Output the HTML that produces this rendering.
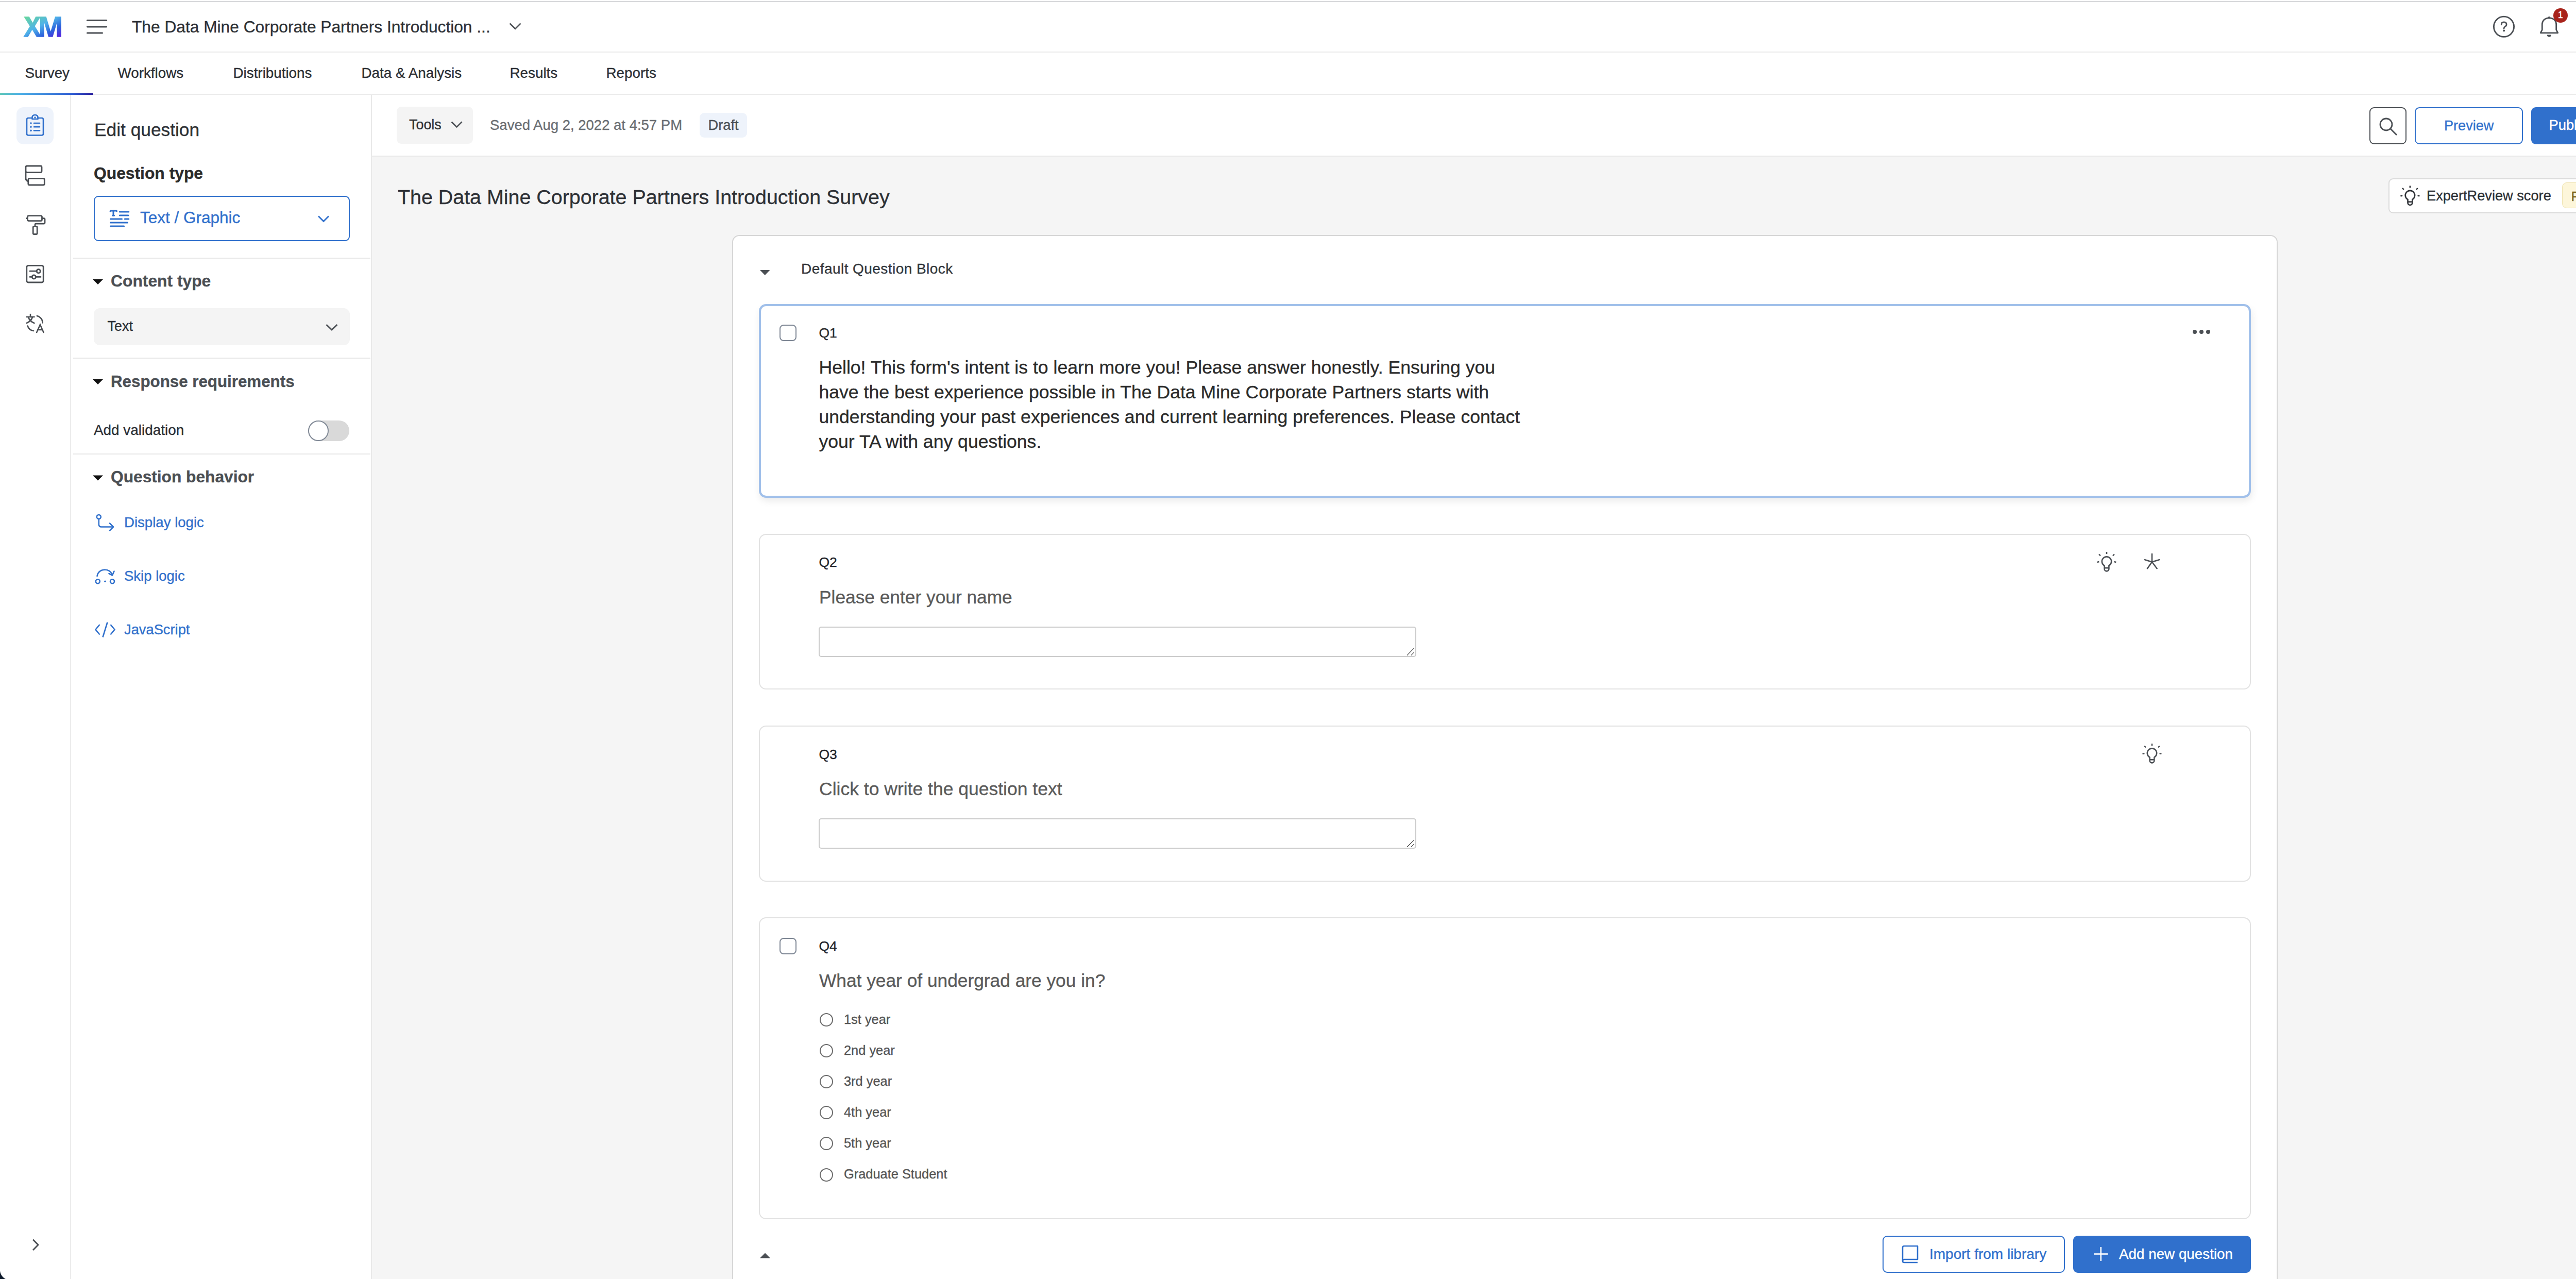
<!DOCTYPE html><html><head><meta charset="utf-8"><style>
html,body{margin:0;padding:0;width:5116px;height:2482px;overflow:hidden;background:#fff;}
body{position:relative;font-family:"Liberation Sans",sans-serif;}
.t{position:absolute;white-space:nowrap;line-height:1;-webkit-text-stroke:0.35px currentColor;}
.b{position:absolute;box-sizing:border-box;}
</style></head><body>
<div class="b" style="left:722px;top:304px;width:4394px;height:2178px;background:#f5f5f5;"></div>
<div class="b" style="left:0px;top:2px;width:5116px;height:2px;background:#d7d8da;"></div>
<div class="b" style="left:0px;top:100px;width:5116px;height:2px;background:#ebebeb;"></div>
<div class="b" style="left:0px;top:182px;width:5116px;height:2px;background:#ebebeb;"></div>
<div class="b" style="left:722px;top:302px;width:4394px;height:2px;background:#e9e9e9;"></div>
<div class="b" style="left:136px;top:184px;width:2px;height:2298px;background:#ececec;"></div>
<div class="b" style="left:720px;top:184px;width:2px;height:2298px;background:#e9e9e9;"></div>
<svg class="b" style="left:40px;top:26px;" width="88" height="52" viewBox="40 26 88 52"><defs><linearGradient id="xmg" x1="0" y1="0" x2="1" y2="1" gradientUnits="objectBoundingBox">
<stop offset="0" stop-color="#6ad99a"/><stop offset="0.45" stop-color="#50b2e9"/><stop offset="0.72" stop-color="#2c62dc"/><stop offset="1" stop-color="#5a1fe0"/></linearGradient></defs>
<path fill="url(#xmg)" fill-rule="evenodd" d="M46.2,32.2 L56.6,32.2 L63.5,43.9 L69.3,32.2 L89.7,32.2 L98.3,61 L107,32.2 L118.9,32.2 L118.9,71.8 L110.3,71.8 L110.3,45.1 L102.4,71.8 L94.1,71.8 L85.8,43.9 L85.8,71.8 L71,71.8 L62.5,57.8 L54.4,71.8 L45.2,71.8 L57.9,51 Z M77.9,34.1 L67.7,50.8 L77.9,67.2 Z"/></svg>
<svg class="b" style="left:160px;top:30px;" width="56" height="44" viewBox="160 30 56 44"><g stroke="#4b4f54" stroke-width="3.2" stroke-linecap="round"><line x1="169.5" y1="39.5" x2="206.5" y2="39.5"/><line x1="169.5" y1="51.8" x2="206.5" y2="51.8"/><line x1="169.5" y1="64" x2="198.5" y2="64"/></g></svg>
<div class="t" style="left:256.00px;top:36.67px;font-size:31.7px;color:#2d3035;">The Data Mine Corporate Partners Introduction ...</div>
<svg class="b" style="left:984px;top:40px;" width="32" height="22" viewBox="984 40 32 22"><polyline points="989.5,45.5 1000,56 1010.5,45.5" fill="none" stroke="#4b4f54" stroke-width="2.6"/></svg>
<svg class="b" style="left:4830px;top:22px;" width="60" height="60" viewBox="4830 22 60 60"><circle cx="4860" cy="51.8" r="19.6" fill="none" stroke="#4b4f54" stroke-width="2.8"/><path d="M4855.2,47.8 q0,-4.9 4.9,-4.9 q5,0 5,4.7 q0,2.6 -2.6,4 q-2.4,1.3 -2.4,3.4 v0.6" fill="none" stroke="#4b4f54" stroke-width="2.7" stroke-linecap="round"/><circle cx="4860.1" cy="59.6" r="2" fill="#4b4f54"/></svg>
<svg class="b" style="left:4920px;top:24px;" width="56" height="56" viewBox="4920 24 56 56"><path d="M4931.2,63.8 H4964.8 L4961.7,57.8 V47.8 C4961.7,39.6 4956,34.8 4948,34.8 C4940,34.8 4934.3,39.6 4934.3,47.8 V57.8 Z" fill="none" stroke="#4b4f54" stroke-width="2.8" stroke-linejoin="round"/><circle cx="4948" cy="34.2" r="2.3" fill="#4b4f54"/><path d="M4943.8,67.6 a4.1,4.1 0 0 0 8.2,0 z" fill="#4b4f54"/></svg>
<div class="b" style="left:4956px;top:16px;width:28px;height:28px;background:#a8231b;border-radius:50%;"></div>
<div class="t" style="left:4965.00px;top:21.19px;font-size:17.5px;color:#fff;">1</div>
<div class="b" style="left:5012px;top:28px;width:48px;height:48px;background:#3070cc;border-radius:50%;"></div>
<div class="t" style="left:5028.50px;top:41.39px;font-size:20.8px;color:#fff;">N</div>
<div class="t" style="left:48.50px;top:128.47px;font-size:27.8px;color:#2d3035;">Survey</div>
<div class="t" style="left:228.50px;top:128.47px;font-size:27.8px;color:#2d3035;">Workflows</div>
<div class="t" style="left:452.50px;top:128.47px;font-size:27.8px;color:#2d3035;">Distributions</div>
<div class="t" style="left:701.50px;top:128.47px;font-size:27.8px;color:#2d3035;">Data &amp; Analysis</div>
<div class="t" style="left:989.50px;top:128.47px;font-size:27.8px;color:#2d3035;">Results</div>
<div class="t" style="left:1176.50px;top:128.47px;font-size:27.8px;color:#2d3035;">Reports</div>
<div class="b" style="left:0px;top:180px;width:181px;height:4px;background:linear-gradient(90deg,#5cc6b8 0%,#4aaee6 22%,#3e86dc 50%,#2d5ad2 78%,#2a1f9c 100%);"></div>
<div class="b" style="left:32px;top:208px;width:72px;height:72px;background:#eef3fb;border-radius:14px;"></div>
<svg class="b" style="left:40px;top:215px;" width="56" height="56" viewBox="40 215 56 56"><g fill="none" stroke="#3070cc" stroke-width="2.6" stroke-linejoin="round">
<path d="M62.5,229 h-7.5 q-3,0 -3,3 v27.5 q0,3 3,3 h26 q3,0 3,-3 v-27.5 q0,-3 -3,-3 h-7.5"/>
<path d="M62.5,231 v-2.5 q0,-5.5 5.5,-5.5 q5.5,0 5.5,5.5 v2.5 z"/>
<line x1="66" y1="239" x2="77" y2="239" stroke-linecap="round"/><line x1="66" y1="246.2" x2="77" y2="246.2" stroke-linecap="round"/><line x1="66" y1="253.4" x2="77" y2="253.4" stroke-linecap="round"/></g>
<g fill="#3070cc"><circle cx="60" cy="239" r="1.8"/><circle cx="60" cy="246.2" r="1.8"/><circle cx="60" cy="253.4" r="1.8"/><circle cx="68" cy="228" r="1.7"/></g></svg>
<svg class="b" style="left:40px;top:312px;" width="56" height="56" viewBox="40 312 56 56"><g fill="none" stroke="#4b4f54" stroke-width="2.8" stroke-linejoin="round">
<rect x="50" y="322" width="31" height="12.6" rx="2.5"/><rect x="54.8" y="346.4" width="31.5" height="12.6" rx="2.5"/>
<path d="M50,334 v12 q0,4.5 4.8,6"/></g></svg>
<svg class="b" style="left:40px;top:410px;" width="56" height="56" viewBox="40 410 56 56"><g fill="none" stroke="#4b4f54" stroke-width="2.8" stroke-linejoin="round">
<rect x="53.5" y="418.6" width="28" height="10" rx="2.5"/><path d="M81.5,423.6 h3.5 q2,0 2,2 v6.5 q0,2 -2,2 h-15 q-2,0 -2,2 v3"/>
<rect x="64.2" y="439.5" width="8" height="15" rx="2"/><path d="M53.5,423.6 h-3.5"/></g></svg>
<svg class="b" style="left:40px;top:505px;" width="56" height="56" viewBox="40 505 56 56"><g fill="none" stroke="#4b4f54" stroke-width="2.8" stroke-linecap="round">
<rect x="51.8" y="515.4" width="32.4" height="32.6" rx="3"/>
<line x1="58" y1="526.2" x2="71" y2="526.2"/><circle cx="74.7" cy="526.2" r="3.6"/>
<line x1="69.5" y1="537.4" x2="79" y2="537.4"/><line x1="58" y1="537.4" x2="62" y2="537.4"/><circle cx="65.8" cy="537.4" r="3.6"/></g></svg>
<svg class="b" style="left:40px;top:600px;" width="56" height="56" viewBox="40 600 56 56"><g fill="none" stroke="#4b4f54" stroke-width="2.6" stroke-linecap="round">
<line x1="51.5" y1="615" x2="66.5" y2="615"/><line x1="59" y1="610" x2="59" y2="614"/>
<path d="M55,615.5 q2.5,8 11.5,11.5"/><path d="M63,615.5 q-2.5,8 -11.5,11.5"/>
<path d="M71.8,613 a14,14 0 0 1 11,13.5"/><path d="M53.6,632.5 a14,14 0 0 0 11.5,9.5"/>
<path d="M71.2,645 l6.7,-15 l6.7,15"/><line x1="73.5" y1="640" x2="82.3" y2="640"/></g></svg>
<svg class="b" style="left:56px;top:2398px;" width="26" height="36" viewBox="56 2398 26 36"><polyline points="64,2405.5 74,2415.8 64,2426" fill="none" stroke="#4b4f54" stroke-width="2.8"/></svg>
<div class="b" style="left:0;top:2462px;width:24px;height:20px;background:radial-gradient(circle at 20.2px 2px, rgba(14,26,44,0) 19.8px, #0e1a2c 20.8px);"></div>
<div class="b" style="left:5092px;top:2462px;width:24px;height:20px;background:radial-gradient(circle at 7.1px 2.2px, rgba(14,26,44,0) 19.8px, #0e1a2c 20.8px);"></div>
<div class="t" style="left:183.00px;top:234.12px;font-size:35.3px;color:#2d3035;">Edit question</div>
<div class="t" style="left:182.00px;top:321.08px;font-size:31.8px;color:#2b2b2b;font-weight:700;">Question type</div>
<div class="b" style="left:182px;top:380px;width:497px;height:88px;border:2.5px solid #3070cc;border-radius:9px;"></div>
<svg class="b" style="left:205px;top:400px;" width="52" height="48" viewBox="205 400 52 48"><g stroke="#3070cc" stroke-width="3" stroke-linecap="round" fill="none">
<path d="M213.8,411 l0.6,-2 h11.8 l0.6,2" stroke-linecap="butt" stroke-width="2.8"/><line x1="220" y1="409" x2="220" y2="418"/><line x1="218.5" y1="418.3" x2="221.5" y2="418.3"/>
<line x1="232.3" y1="410.9" x2="249.8" y2="410.9"/><line x1="232.3" y1="418" x2="249" y2="418"/>
<line x1="214.5" y1="424.9" x2="236.5" y2="424.9"/><line x1="242.3" y1="424.9" x2="249.8" y2="424.9"/>
<line x1="214.5" y1="432" x2="247.5" y2="432"/><line x1="214.5" y1="439" x2="240.6" y2="439"/></g></svg>
<div class="t" style="left:272.00px;top:407.34px;font-size:31.5px;color:#3070cc;">Text / Graphic</div>
<svg class="b" style="left:610px;top:412px;" width="36" height="26" viewBox="610 412 36 26"><polyline points="618,419.5 628,429.5 638,419.5" fill="none" stroke="#3070cc" stroke-width="2.8"/></svg>
<div class="b" style="left:142px;top:500px;width:577px;height:2px;background:#e8e8e8;"></div>
<svg class="b" style="left:176px;top:536px;" width="30" height="22" viewBox="176 536 30 22"><polygon points="180,542 200,542 190,552" fill="#111"/></svg>
<div class="t" style="left:215.00px;top:530.08px;font-size:31.8px;color:#4b4f54;font-weight:700;">Content type</div>
<div class="b" style="left:182px;top:598px;width:497px;height:72px;background:#f4f4f4;border-radius:12px;"></div>
<div class="t" style="left:208.60px;top:619.73px;font-size:26.9px;color:#2d3035;">Text</div>
<svg class="b" style="left:626px;top:622px;" width="36" height="26" viewBox="626 622 36 26"><polyline points="633.5,630 644,640 654.5,630" fill="none" stroke="#4b4f54" stroke-width="2.8"/></svg>
<div class="b" style="left:142px;top:694px;width:577px;height:2px;background:#e8e8e8;"></div>
<svg class="b" style="left:176px;top:730px;" width="30" height="22" viewBox="176 730 30 22"><polygon points="180,736 200,736 190,746" fill="#111"/></svg>
<div class="t" style="left:215.00px;top:724.50px;font-size:31.3px;color:#4b4f54;font-weight:700;">Response requirements</div>
<div class="t" style="left:182.00px;top:821.38px;font-size:27.9px;color:#2d3035;">Add validation</div>
<div class="b" style="left:598px;top:816px;width:80px;height:40px;background:#d9d9d9;border-radius:20px;"></div>
<div class="b" style="left:598px;top:816px;width:40px;height:40px;background:#fff;border:2.5px solid #808996;border-radius:50%;"></div>
<div class="b" style="left:142px;top:880px;width:577px;height:2px;background:#e8e8e8;"></div>
<svg class="b" style="left:176px;top:922px;" width="30" height="22" viewBox="176 922 30 22"><polygon points="180,922.5 200,922.5 190,932.5" fill="#111"/></svg>
<div class="t" style="left:215.00px;top:909.67px;font-size:31.7px;color:#4b4f54;font-weight:700;">Question behavior</div>
<svg class="b" style="left:180px;top:992px;" width="48" height="44" viewBox="180 992 48 44"><g fill="none" stroke="#3070cc" stroke-width="2.6" stroke-linecap="round" stroke-linejoin="round">
<circle cx="191.8" cy="1003" r="4"/><path d="M191.8,1007 v10.5 q0,5 5,5 h22"/><polyline points="213,1015.5 220,1022.5 213,1029.5"/></g></svg>
<div class="t" style="left:241.00px;top:999.64px;font-size:27.6px;color:#3070cc;">Display logic</div>
<svg class="b" style="left:180px;top:1098px;" width="48" height="40" viewBox="180 1098 48 40"><g fill="none" stroke="#3070cc" stroke-width="2.6" stroke-linecap="round" stroke-linejoin="round">
<circle cx="189.8" cy="1128.3" r="4"/><circle cx="218" cy="1128.3" r="4"/>
<path d="M188.5,1118 q2,-11.5 14.5,-12.5 q11,0 15,10"/><polyline points="211.5,1113 218,1116.5 221.5,1108.5"/></g>
<circle cx="204" cy="1128.3" r="1.8" fill="#3070cc"/></svg>
<div class="t" style="left:241.00px;top:1103.72px;font-size:27.5px;color:#3070cc;">Skip logic</div>
<svg class="b" style="left:180px;top:1200px;" width="48" height="42" viewBox="180 1200 48 42"><g fill="none" stroke="#3070cc" stroke-width="2.6" stroke-linejoin="miter">
<polyline points="193.5,1212 185.5,1221.8 193.5,1231.5"/><polyline points="214.5,1212 222.5,1221.8 214.5,1231.5"/><line x1="208.5" y1="1207.5" x2="199.5" y2="1236.5"/></g></svg>
<div class="t" style="left:241.00px;top:1208.29px;font-size:27.3px;color:#3070cc;">JavaScript</div>
<div class="b" style="left:770px;top:207px;width:148px;height:72px;background:#f4f4f4;border-radius:9px;"></div>
<div class="t" style="left:794.00px;top:229.23px;font-size:26.9px;color:#2d3035;">Tools</div>
<svg class="b" style="left:870px;top:230px;" width="32" height="26" viewBox="870 230 32 26"><polyline points="876.5,236.5 886.5,246.5 896.5,236.5" fill="none" stroke="#4b4f54" stroke-width="2.6"/></svg>
<div class="t" style="left:951.00px;top:228.72px;font-size:27.5px;color:#6b6e73;">Saved Aug 2, 2022 at 4:57 PM</div>
<div class="b" style="left:1358px;top:219px;width:92px;height:48px;background:#eef3fb;border-radius:9px;"></div>
<div class="t" style="left:1374.50px;top:228.89px;font-size:27.3px;color:#4b4f54;">Draft</div>
<div class="b" style="left:4599px;top:208px;width:72px;height:72px;border:2.5px solid #4b4f54;border-radius:9px;"></div>
<svg class="b" style="left:4610px;top:220px;" width="50" height="50" viewBox="4610 220 50 50"><circle cx="4631.5" cy="241.5" r="11.5" fill="none" stroke="#4b4f54" stroke-width="2.8"/><line x1="4639.8" y1="249.8" x2="4652" y2="262" stroke="#4b4f54" stroke-width="2.8"/></svg>
<div class="b" style="left:4687px;top:208px;width:210px;height:72px;border:2.5px solid #3070cc;border-radius:9px;background:#fff;"></div>
<div class="t" style="left:4744.00px;top:229.56px;font-size:27.1px;color:#3070cc;">Preview</div>
<div class="b" style="left:4913px;top:208px;width:159px;height:72px;background:#3070cc;border-radius:9px;"></div>
<div class="t" style="left:4947.50px;top:229.39px;font-size:27.3px;color:#fff;">Publish</div>
<div class="t" style="left:772.00px;top:362.65px;font-size:39.4px;color:#2d3035;">The Data Mine Corporate Partners Introduction Survey</div>
<div class="b" style="left:4636px;top:346px;width:436px;height:68px;background:#fff;border:2px solid #dadada;border-radius:9px;"></div>
<svg class="b" style="left:4653px;top:355px;" width="48" height="48" viewBox="4653 355 48 48"><g fill="none" stroke="#2d3035" stroke-width="2.6">
<path d="M4673.50,393.50 L4673.50,387.20 A9.2,9.2 0 1 1 4682.30,387.20 L4682.30,393.50 A4.4,4.4 0 0 1 4673.50,393.50 Z"/>
<line x1="4673.5" y1="391.7" x2="4682.299999999999" y2="391.7"/>
<path d="M4677.90,360.40 L4677.90,364.40 M4665.90,367.90 L4663.00,365.10 M4689.90,367.90 L4692.80,365.10 M4663.30,379.50 L4659.50,380.50 M4692.50,379.50 L4696.30,380.50"/></g></svg>
<div class="t" style="left:4710.00px;top:366.28px;font-size:27.2px;color:#2d3035;">ExpertReview score</div>
<div class="b" style="left:4973px;top:354px;width:81px;height:50px;background:#fdf6da;border:1.5px solid #efe3b0;border-radius:9px;"></div>
<div class="t" style="left:4990.50px;top:367.82px;font-size:26.2px;color:#7c6318;">Fair</div>
<div class="b" style="left:1421px;top:456px;width:3000px;height:2144px;background:#fff;border:2px solid #d6d6d6;border-radius:14px;"></div>
<svg class="b" style="left:1470px;top:518px;" width="30" height="22" viewBox="1470 518 30 22"><polygon points="1475,524 1494.5,524 1484.75,534" fill="#4b4f54"/></svg>
<div class="t" style="left:1555.00px;top:508.30px;font-size:28px;color:#33363b;letter-spacing:0.45px;">Default Question Block</div>
<div class="b" style="left:1473px;top:590px;width:2896px;height:376px;border:4px solid #a1c0ea;border-radius:14px;background:#fff;box-shadow:2px 7px 14px rgba(0,0,0,0.08);"></div>
<div class="b" style="left:1513px;top:630px;width:32.5px;height:32px;border:2.5px solid #7c8593;border-radius:8px;background:#fff;"></div>
<div class="t" style="left:1589.50px;top:632.57px;font-size:26.5px;color:#2b2b2b;">Q1</div>
<div class="t" style="left:1589.50px;top:695.86px;font-size:35.6px;color:#2b2b2b;">Hello! This form's intent is to learn more you! Please answer honestly. Ensuring you</div>
<div class="t" style="left:1589.50px;top:743.96px;font-size:35.6px;color:#2b2b2b;">have the best experience possible in The Data Mine Corporate Partners starts with</div>
<div class="t" style="left:1589.50px;top:792.06px;font-size:35.6px;color:#2b2b2b;">understanding your past experiences and current learning preferences. Please contact</div>
<div class="t" style="left:1589.50px;top:840.16px;font-size:35.6px;color:#2b2b2b;">your TA with any questions.</div>
<svg class="b" style="left:4250px;top:634px;" width="46" height="20" viewBox="4250 634 46 20"><g fill="#4b4f54"><circle cx="4260" cy="644" r="4"/><circle cx="4273" cy="644" r="4"/><circle cx="4286" cy="644" r="4"/></g></svg>
<div class="b" style="left:1473px;top:1036px;width:2896px;height:302px;border:2px solid #e2e2e2;border-radius:14px;background:#fff;"></div>
<div class="t" style="left:1589.50px;top:1077.87px;font-size:26.5px;color:#1f2329;">Q2</div>
<div class="t" style="left:1590.00px;top:1141.32px;font-size:35.3px;color:#5a5a5a;">Please enter your name</div>
<div class="b" style="left:1589px;top:1216px;width:1160px;height:59px;border:2px solid #cbcbcb;border-radius:5px;background:#fff;"></div>
<svg class="b" style="left:2728px;top:1254px;" width="20" height="20" viewBox="2728 1254 20 20"><g fill="#3a3a3a"><rect x="2731.2" y="1270.1" width="1.7" height="1.7"/><rect x="2733.2" y="1268.1" width="1.7" height="1.7"/><rect x="2735.2" y="1266.1" width="1.7" height="1.7"/><rect x="2737.2" y="1264.1" width="1.7" height="1.7"/><rect x="2739.2" y="1262.1" width="1.7" height="1.7"/><rect x="2741.2" y="1260.1" width="1.7" height="1.7"/><rect x="2743.2" y="1258.1" width="1.7" height="1.7"/><rect x="2739.2" y="1270.1" width="1.7" height="1.7"/><rect x="2741.2" y="1268.1" width="1.7" height="1.7"/><rect x="2743.2" y="1266.1" width="1.7" height="1.7"/></g></svg>
<svg class="b" style="left:4065px;top:1065px;" width="48" height="48" viewBox="4065 1065 48 48"><g fill="none" stroke="#4b4f54" stroke-width="2.6">
<path d="M4084.60,1104.00 L4084.60,1097.70 A9.2,9.2 0 1 1 4093.40,1097.70 L4093.40,1104.00 A4.4,4.4 0 0 1 4084.60,1104.00 Z"/>
<line x1="4084.6" y1="1102.2" x2="4093.4" y2="1102.2"/>
<path d="M4089.00,1070.90 L4089.00,1074.90 M4077.00,1078.40 L4074.10,1075.60 M4101.00,1078.40 L4103.90,1075.60 M4074.40,1090.00 L4070.60,1091.00 M4103.60,1090.00 L4107.40,1091.00"/></g></svg>
<svg class="b" style="left:4150px;top:1066px;" width="52" height="46" viewBox="4150 1066 52 46"><g stroke="#4b4f54" stroke-width="2.6" stroke-linecap="round"><line x1="4177" y1="1075" x2="4177" y2="1090.5"/><line x1="4177" y1="1090.5" x2="4163.2" y2="1086.2"/><line x1="4177" y1="1090.5" x2="4191" y2="1086.2"/><line x1="4177" y1="1090.5" x2="4168" y2="1103.2"/><line x1="4177" y1="1090.5" x2="4186.6" y2="1103.2"/></g></svg>
<div class="b" style="left:1473px;top:1408px;width:2896px;height:303px;border:2px solid #e2e2e2;border-radius:14px;background:#fff;"></div>
<div class="t" style="left:1589.50px;top:1450.57px;font-size:26.5px;color:#1f2329;">Q3</div>
<div class="t" style="left:1590.00px;top:1513.75px;font-size:35.5px;color:#5a5a5a;">Click to write the question text</div>
<div class="b" style="left:1589px;top:1588px;width:1160px;height:59px;border:2px solid #cbcbcb;border-radius:5px;background:#fff;"></div>
<svg class="b" style="left:2728px;top:1626px;" width="20" height="20" viewBox="2728 1626 20 20"><g fill="#3a3a3a"><rect x="2731.2" y="1642.1" width="1.7" height="1.7"/><rect x="2733.2" y="1640.1" width="1.7" height="1.7"/><rect x="2735.2" y="1638.1" width="1.7" height="1.7"/><rect x="2737.2" y="1636.1" width="1.7" height="1.7"/><rect x="2739.2" y="1634.1" width="1.7" height="1.7"/><rect x="2741.2" y="1632.1" width="1.7" height="1.7"/><rect x="2743.2" y="1630.1" width="1.7" height="1.7"/><rect x="2739.2" y="1642.1" width="1.7" height="1.7"/><rect x="2741.2" y="1640.1" width="1.7" height="1.7"/><rect x="2743.2" y="1638.1" width="1.7" height="1.7"/></g></svg>
<svg class="b" style="left:4153px;top:1437px;" width="48" height="48" viewBox="4153 1437 48 48"><g fill="none" stroke="#4b4f54" stroke-width="2.6">
<path d="M4172.60,1476.00 L4172.60,1469.70 A9.2,9.2 0 1 1 4181.40,1469.70 L4181.40,1476.00 A4.4,4.4 0 0 1 4172.60,1476.00 Z"/>
<line x1="4172.6" y1="1474.2" x2="4181.4" y2="1474.2"/>
<path d="M4177.00,1442.90 L4177.00,1446.90 M4165.00,1450.40 L4162.10,1447.60 M4189.00,1450.40 L4191.90,1447.60 M4162.40,1462.00 L4158.60,1463.00 M4191.60,1462.00 L4195.40,1463.00"/></g></svg>
<div class="b" style="left:1473px;top:1780px;width:2896px;height:586px;border:2px solid #e2e2e2;border-radius:14px;background:#fff;"></div>
<div class="b" style="left:1513px;top:1820px;width:32.5px;height:32px;border:2.5px solid #7c8593;border-radius:8px;background:#fff;"></div>
<div class="t" style="left:1589.50px;top:1822.57px;font-size:26.5px;color:#1f2329;">Q4</div>
<div class="t" style="left:1590.00px;top:1885.32px;font-size:35.3px;color:#5a5a5a;">What year of undergrad are you in?</div>
<div class="b" style="left:1591px;top:1966.0px;width:26px;height:26.0px;border:2px solid #6b6b6b;border-radius:50%;background:#fff;"></div>
<div class="t" style="left:1638.00px;top:1965.80px;font-size:25.4px;color:#555555;">1st year</div>
<div class="b" style="left:1591px;top:2026.1px;width:26px;height:26.0px;border:2px solid #6b6b6b;border-radius:50%;background:#fff;"></div>
<div class="t" style="left:1638.00px;top:2025.90px;font-size:25.4px;color:#555555;">2nd year</div>
<div class="b" style="left:1591px;top:2086.2px;width:26px;height:26.0px;border:2px solid #6b6b6b;border-radius:50%;background:#fff;"></div>
<div class="t" style="left:1638.00px;top:2086.00px;font-size:25.4px;color:#555555;">3rd year</div>
<div class="b" style="left:1591px;top:2146.3px;width:26px;height:26.0px;border:2px solid #6b6b6b;border-radius:50%;background:#fff;"></div>
<div class="t" style="left:1638.00px;top:2146.10px;font-size:25.4px;color:#555555;">4th year</div>
<div class="b" style="left:1591px;top:2206.4px;width:26px;height:26.0px;border:2px solid #6b6b6b;border-radius:50%;background:#fff;"></div>
<div class="t" style="left:1638.00px;top:2206.20px;font-size:25.4px;color:#555555;">5th year</div>
<div class="b" style="left:1591px;top:2266.5px;width:26px;height:26.0px;border:2px solid #6b6b6b;border-radius:50%;background:#fff;"></div>
<div class="t" style="left:1638.00px;top:2266.30px;font-size:25.4px;color:#555555;">Graduate Student</div>
<svg class="b" style="left:1470px;top:2426px;" width="30" height="20" viewBox="1470 2426 30 20"><polygon points="1475,2441.5 1495,2441.5 1485,2431.5" fill="#4b4f54"/></svg>
<div class="b" style="left:3654px;top:2398px;width:354px;height:72px;border:2.5px solid #3070cc;border-radius:9px;background:#fff;"></div>
<svg class="b" style="left:3686px;top:2410px;" width="44" height="46" viewBox="3686 2410 44 46"><g fill="none" stroke="#3070cc" stroke-width="2.6" stroke-linejoin="round"><path d="M3696,2418 h26 v26 h-26 q-3,0 -3,3 q0,3 3,3 h26"/><path d="M3693,2447 v-26 q0,-3 3,-3"/></g></svg>
<div class="t" style="left:3745.00px;top:2419.80px;font-size:28px;color:#3070cc;">Import from library</div>
<div class="b" style="left:4024px;top:2398px;width:345px;height:72px;background:#3070cc;border-radius:9px;"></div>
<svg class="b" style="left:4058px;top:2414px;" width="40" height="40" viewBox="4058 2414 40 40"><g stroke="#fff" stroke-width="2.6"><line x1="4064" y1="2433.5" x2="4091.5" y2="2433.5"/><line x1="4077.8" y1="2420" x2="4077.8" y2="2447"/></g></svg>
<div class="t" style="left:4113.00px;top:2419.97px;font-size:27.8px;color:#fff;">Add new question</div>
</body></html>
